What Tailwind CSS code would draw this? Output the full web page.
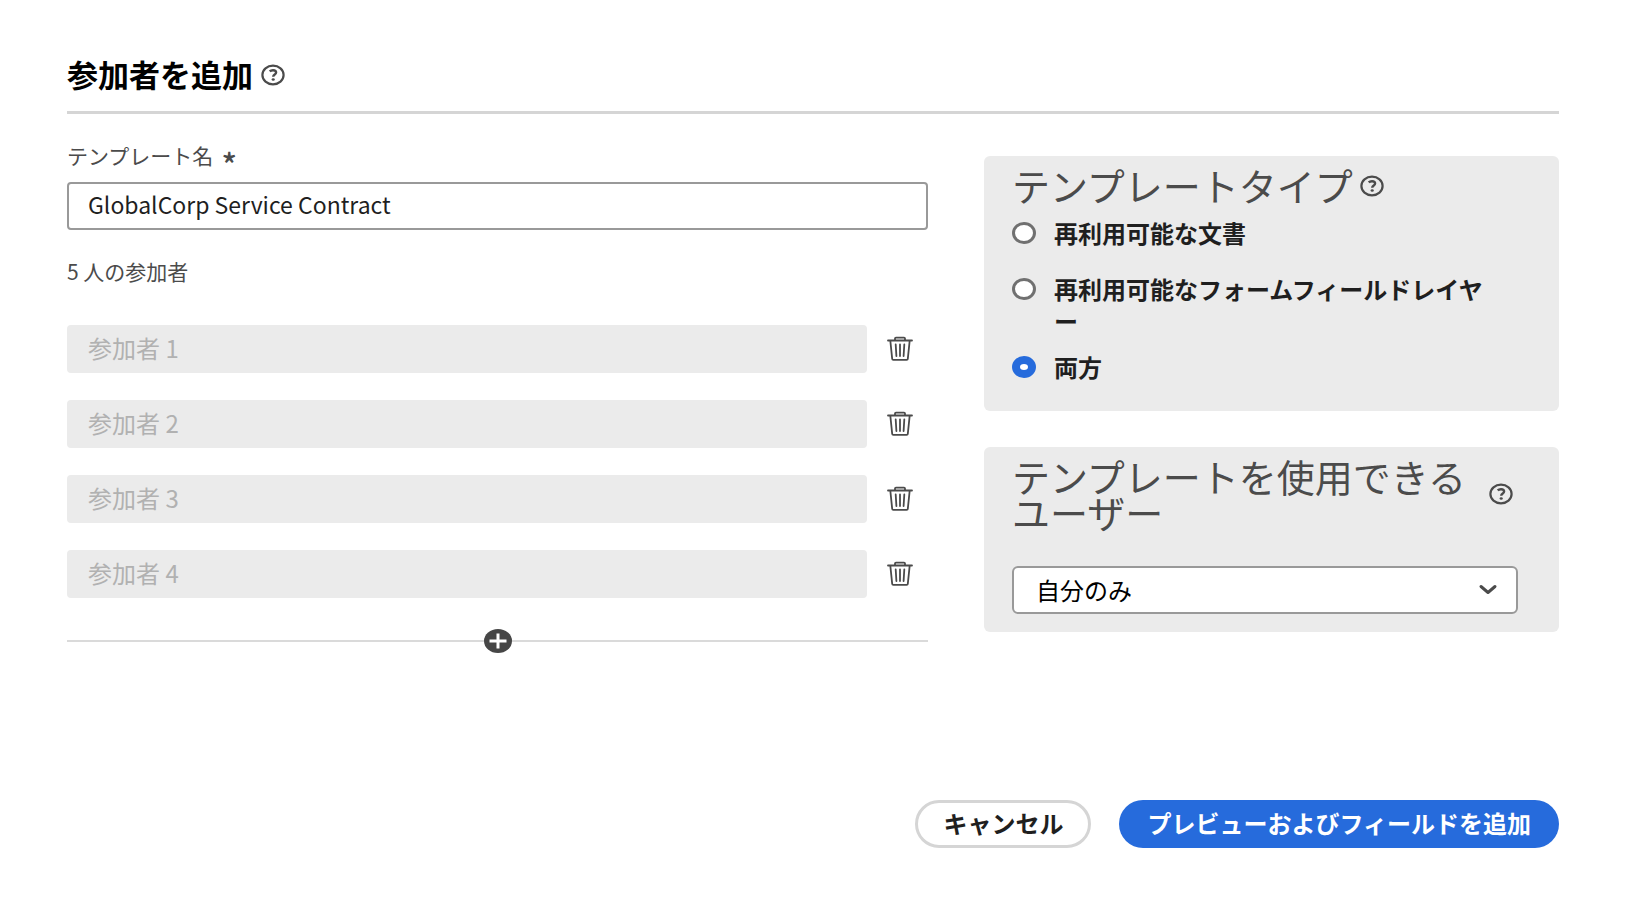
<!DOCTYPE html>
<html lang="ja">
<head>
    <meta charset="UTF-8">
    <meta name="viewport" content="width=device-width, initial-scale=1.0">
    <title>参加者を追加</title>
    <script src="https://cdn.jsdelivr.net/npm/@tailwindcss/browser@4"></script>
</head>
<body class="bg-white font-['Noto_Sans_CJK_JP',sans-serif] text-[#4b4b4b]">
    <!-- Shared icons -->
    <svg class="hidden">
        <symbol id="help" viewBox="0 0 24 22">
            <ellipse cx="12" cy="11" rx="10.6" ry="9.3" fill="none" stroke="currentColor" stroke-width="2.2"/>
            <path d="M8.700 7.400c.8-.8 1.900-1.200 3.300-1.200 2 0 3.100.9 3.100 2.300 0 2-2.900 1.900-2.900 4.200" fill="none" stroke="currentColor" stroke-width="2.400"/>
            <ellipse cx="12.200" cy="15.500" rx="1.600" ry="1.300" fill="currentColor"/>
        </symbol>
        <symbol id="trash" viewBox="0 0 26 26" fill="none" stroke="currentColor" stroke-width="1.800" stroke-linecap="round" stroke-linejoin="round">
            <path d="M1 4.500h24M8 4.500V2.600q0-1 1-1h8q1 0 1 1v1.900M3.300 4.500l1.900 18.400q.1 1 1.100 1h13.400q1 0 1.100-1l1.900-18.400"/>
            <path d="M8.700 8.500l.7 11.500M13 8.500v11.500M17.300 8.500l-.7 11.500"/>
        </symbol>
    </svg>

    <main class="px-[67px] pt-[52px] pb-14">
        <header class="flex items-center gap-2 border-b-3 border-[#d5d5d5] pb-[15px]">
            <h1 class="text-[31px] leading-[44px] font-bold text-black">参加者を追加</h1>
            <button type="button" aria-label="ヘルプ" class="pt-0.5"><svg class="h-[22px] w-6"><use href="#help"/></svg></button>
        </header>

        <form>
            <div class="grid grid-cols-[861fr_575fr] gap-14">
                <!-- Participants -->
                <section class="pt-[29px]">
                    <label for="templateName" class="flex h-6 gap-2 text-[21px] leading-6">テンプレート名 <span class="pt-2 text-[32px] font-medium">*</span></label>
                    <input type="text" id="templateName" value="GlobalCorp Service Contract" class="mt-[15px] block h-12 w-full rounded-sm border-2 border-[#999999] px-[19px] pb-1 text-[23px] text-[#1f1f1f]">
                    <p class="mt-[29px] text-[21px] leading-6">5 人の参加者</p>

                    <div class="mt-[42px] flex flex-col gap-[27px]">
                        <div class="flex items-center gap-5">
                            <input type="text" aria-label="参加者 1" placeholder="参加者 1" class="h-12 min-w-0 flex-1 rounded-sm bg-[#ebebeb] px-[21px] pb-1 text-2xl placeholder:text-[#b1b1b1]">
                            <button type="button" aria-label="参加者 1 を削除" class="mr-[15px]"><svg class="size-[26px]"><use href="#trash"/></svg></button>
                        </div>
                        <div class="flex items-center gap-5">
                            <input type="text" aria-label="参加者 2" placeholder="参加者 2" class="h-12 min-w-0 flex-1 rounded-sm bg-[#ebebeb] px-[21px] pb-1 text-2xl placeholder:text-[#b1b1b1]">
                            <button type="button" aria-label="参加者 2 を削除" class="mr-[15px]"><svg class="size-[26px]"><use href="#trash"/></svg></button>
                        </div>
                        <div class="flex items-center gap-5">
                            <input type="text" aria-label="参加者 3" placeholder="参加者 3" class="h-12 min-w-0 flex-1 rounded-sm bg-[#ebebeb] px-[21px] pb-1 text-2xl placeholder:text-[#b1b1b1]">
                            <button type="button" aria-label="参加者 3 を削除" class="mr-[15px]"><svg class="size-[26px]"><use href="#trash"/></svg></button>
                        </div>
                        <div class="flex items-center gap-5">
                            <input type="text" aria-label="参加者 4" placeholder="参加者 4" class="h-12 min-w-0 flex-1 rounded-sm bg-[#ebebeb] px-[21px] pb-1 text-2xl placeholder:text-[#b1b1b1]">
                            <button type="button" aria-label="参加者 4 を削除" class="mr-[15px]"><svg class="size-[26px]"><use href="#trash"/></svg></button>
                        </div>
                    </div>

                    <!-- Add participant -->
                    <div class="mt-[31px] flex items-center">
                        <div class="h-0.5 flex-1 bg-[#dadada]"></div>
                        <button type="button" aria-label="参加者を追加">
                            <svg class="h-6 w-7" viewBox="0 0 28 24">
                                <ellipse cx="14" cy="12" rx="14" ry="12" fill="#464646"/>
                                <path d="M5.500 12h17M14 4.500v15" stroke="#fff" stroke-width="3"/>
                            </svg>
                        </button>
                        <div class="h-0.5 flex-1 bg-[#dadada]"></div>
                    </div>
                </section>

                <!-- Template settings -->
                <aside class="flex flex-col gap-9 pt-[42px]">
                    <div role="radiogroup" aria-labelledby="typeHeading" class="rounded-md bg-[#ebebeb] pt-[11px] pr-[68px] pb-7 pl-7">
                        <div class="flex items-center gap-[7px]">
                            <h2 id="typeHeading" class="text-[38px] leading-9">テンプレートタイプ</h2>
                            <button type="button" aria-label="ヘルプ" class="pt-0.5"><svg class="h-[22px] w-6"><use href="#help"/></svg></button>
                        </div>
                        <div class="mt-[14px] text-2xl leading-8 font-bold text-[#1f1f1f]">
                            <div class="flex items-start gap-[18px]">
                                <input type="radio" id="typeDocument" name="templateType" class="mt-[5px] h-[22px] w-6 shrink-0 appearance-none rounded-[50%] border-3 border-[#707070] bg-white checked:border-8 checked:border-[#266bdc]">
                                <label for="typeDocument">再利用可能な文書</label>
                            </div>
                            <div class="mt-6 flex items-start gap-[18px]">
                                <input type="radio" id="typeLayer" name="templateType" class="mt-[5px] h-[22px] w-6 shrink-0 appearance-none rounded-[50%] border-3 border-[#707070] bg-white checked:border-8 checked:border-[#266bdc]">
                                <label for="typeLayer" class="break-all [line-break:anywhere]">再利用可能なフォームフィールドレイヤー</label>
                            </div>
                            <div class="mt-[14px] flex items-start gap-[18px]">
                                <input type="radio" id="typeBoth" name="templateType" checked class="mt-[5px] h-[22px] w-6 shrink-0 appearance-none rounded-[50%] border-3 border-[#707070] bg-white checked:border-8 checked:border-[#266bdc]">
                                <label for="typeBoth">両方</label>
                            </div>
                        </div>
                    </div>

                    <div class="rounded-md bg-[#ebebeb] pt-[11px] pr-[41px] pb-[18px] pl-7">
                        <div class="flex items-center justify-between pr-[5px]">
                            <label for="templateUsers" class="text-[38px] leading-9">テンプレートを使用できる<br>ユーザー</label>
                            <button type="button" aria-label="ヘルプ"><svg class="h-[22px] w-6"><use href="#help"/></svg></button>
                        </div>
                        <div class="relative mt-9">
                            <select id="templateUsers" class="block h-12 w-full appearance-none rounded-md border-2 border-[#999999] bg-white px-[22px] text-2xl text-black">
                                <option>自分のみ</option>
                            </select>
                            <svg class="pointer-events-none absolute top-[18px] right-5 h-3 w-5" viewBox="0 0 20 12" fill="none" stroke="currentColor" stroke-width="3" stroke-linecap="round" stroke-linejoin="round">
                                <path d="M3 2.500l7 6 7-6"/>
                            </svg>
                        </div>
                    </div>
                </aside>
            </div>

            <div class="mt-[147px] flex justify-end gap-7">
                <button type="button" class="h-12 rounded-full border-3 border-[#d5d5d5] px-[25px] pb-0.5 text-2xl font-bold text-[#1f1f1f]">キャンセル</button>
                <button type="submit" class="h-12 rounded-full bg-[#266bdc] px-7 pb-0.5 text-2xl font-bold text-white">プレビューおよびフィールドを追加</button>
            </div>
        </form>
    </main>
</body>
</html>
